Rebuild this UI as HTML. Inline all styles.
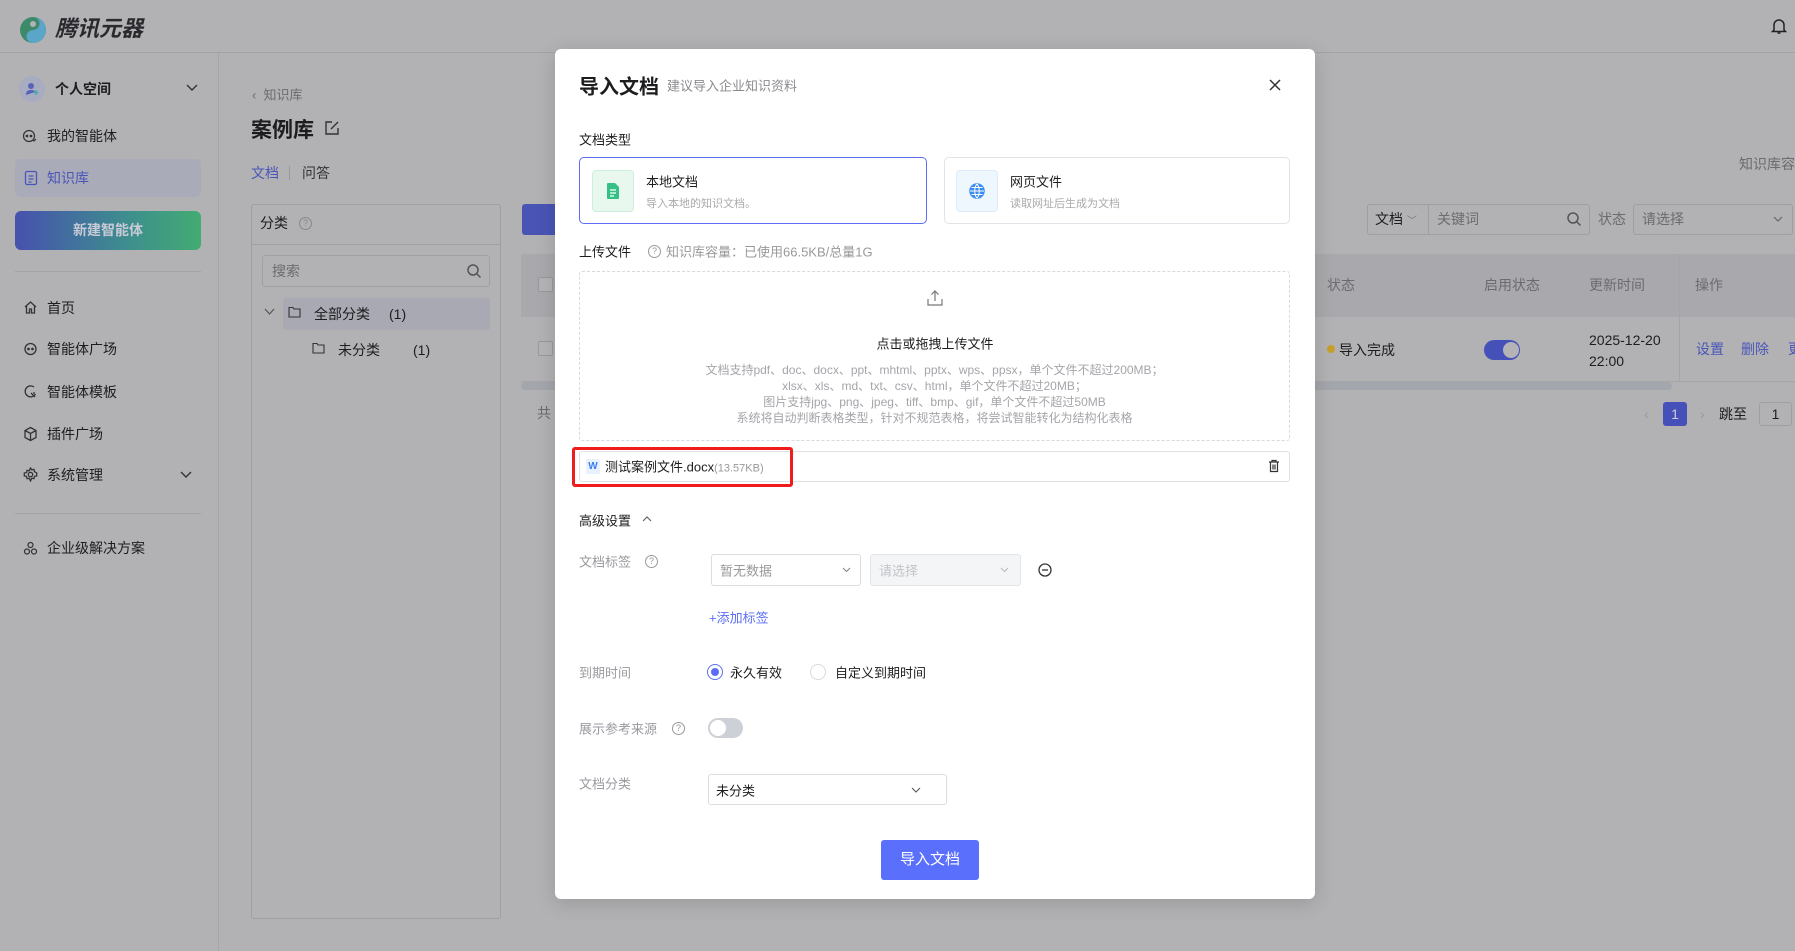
<!DOCTYPE html>
<html><head><meta charset="utf-8">
<style>
*{margin:0;padding:0;box-sizing:border-box}
body{width:1795px;height:951px;overflow:hidden;background:#b2b2b4;font-family:"Liberation Sans","Noto Sans CJK SC",sans-serif;font-size:14px;color:#1d1d1f;position:relative}
.a{position:absolute;white-space:nowrap}
.c{transform:translateY(-50%)}
.g{color:#6b6b70}
.blue{color:#4a55b8}
.ico{position:absolute}
</style></head><body>
<div class="a" style="left:0;top:0;width:1795px;height:53px;border-bottom:1px solid #a3a3a6"></div>
<svg class="ico" style="left:19px;top:16px" width="28" height="28" viewBox="0 0 28 28"><circle cx="14" cy="14" r="13" fill="#3d8a6a"/><path d="M14 1a13 13 0 0 1 0 26a6.5 6.5 0 0 1 0-13a6.5 6.5 0 0 0 0-13z" fill="#5aa5c8"/><circle cx="14" cy="8" r="3" fill="#b2b2b4"/></svg>
<div class="a c" style="left:55px;top:27px;font-size:22px;font-weight:bold;font-style:italic;color:#2a2a2e">腾讯元器</div>
<svg class="ico" style="left:1771px;top:17px" width="16" height="18" viewBox="0 0 16 18" fill="none" stroke="#222" stroke-width="1.5"><path d="M3 13V8a5 5 0 0 1 10 0v5l1.5 1.5h-13z"/><path d="M6.5 16h3"/></svg>
<div class="a" style="left:218px;top:53px;width:1px;height:898px;background:#a6a6a8"></div>
<div class="a" style="left:19px;top:76px;width:26px;height:26px;border-radius:50%;background:#a8acc0"></div>
<svg class="ico" style="left:25px;top:82px" width="14" height="14" viewBox="0 0 14 14"><circle cx="6" cy="4" r="3" fill="#5962b8"/><path d="M1 13c0-4 2-5 5-5s4 1 4 2" fill="#5962b8"/><path d="M11 8v5M8.5 10.5h5" stroke="#4aa" stroke-width="1.5"/></svg>
<div class="a c" style="left:55px;top:89px;font-size:14px;font-weight:bold">个人空间</div>
<svg class="ico" style="left:186px;top:84px" width="12" height="8" viewBox="0 0 12 8" fill="none" stroke="#333" stroke-width="1.4"><path d="M1 1l5 5 5-5"/></svg>
<div class="a" style="left:15px;top:159px;width:186px;height:38px;border-radius:5px;background:#a9abb8"></div>
<svg class="ico" style="left:22px;top:129px" width="16" height="16" viewBox="0 0 16 16" fill="none" stroke="#333" stroke-width="1.2"><circle cx="7" cy="7" r="5.5"/><circle cx="5" cy="7" r=".8" fill="#333"/><circle cx="9" cy="7" r=".8" fill="#333"/><path d="M11 11l1 1 2-2"/></svg>
<div class="a c" style="left:47px;top:136px">我的智能体</div>
<svg class="ico" style="left:24px;top:170px" width="14" height="16" viewBox="0 0 14 16" fill="none" stroke="#4a55b8" stroke-width="1.3"><rect x="1.5" y="1.5" width="11" height="13" rx="1.5"/><path d="M4.5 6h5M4.5 9h5M4.5 12h3"/></svg>
<div class="a c blue" style="left:47px;top:178px">知识库</div>
<div class="a" style="left:15px;top:211px;width:186px;height:39px;border-radius:6px;background:linear-gradient(90deg,#4751ae,#3d8e8e 60%,#43ab73);color:#c8cad6;font-weight:bold;text-align:center;line-height:39px">新建智能体</div>
<div class="a" style="left:15px;top:271px;width:186px;height:1px;background:#a3a3a6"></div>
<svg class="ico" style="left:23px;top:300px" width="15" height="15" viewBox="0 0 15 15" fill="none" stroke="#333" stroke-width="1.3"><path d="M2 7L7.5 2 13 7M3.5 6v7h3v-4h2v4h3V6"/></svg>
<div class="a c" style="left:47px;top:308px">首页</div>
<svg class="ico" style="left:23px;top:341px" width="15" height="15" viewBox="0 0 15 15" fill="none" stroke="#333" stroke-width="1.3"><circle cx="7.5" cy="8" r="5.5"/><circle cx="5.5" cy="8" r=".7" fill="#333"/><circle cx="9.5" cy="8" r=".7" fill="#333"/></svg>
<div class="a c" style="left:47px;top:349px">智能体广场</div>
<svg class="ico" style="left:23px;top:384px" width="15" height="15" viewBox="0 0 15 15" fill="none" stroke="#333" stroke-width="1.3"><path d="M11 3A5.5 5.5 0 1 0 12.5 10M8 9l4 4M10 9l2 0"/></svg>
<div class="a c" style="left:47px;top:392px">智能体模板</div>
<svg class="ico" style="left:23px;top:426px" width="15" height="16" viewBox="0 0 15 16" fill="none" stroke="#333" stroke-width="1.3"><path d="M7.5 1.5l5.5 3v7l-5.5 3-5.5-3v-7z M2 4.5l5.5 3 5.5-3M7.5 7.5v7"/></svg>
<div class="a c" style="left:47px;top:434px">插件广场</div>
<svg class="ico" style="left:23px;top:467px" width="15" height="15" viewBox="0 0 15 15" fill="none" stroke="#333" stroke-width="1.3"><circle cx="7.5" cy="7.5" r="2.2"/><path d="M7.5 1l1.3 1.8 2.2-.4.4 2.2L13.7 6v3l-2.3.4-.4 2.2-2.2-.4L7.5 14l-1.3-2.8-2.2.4-.4-2.2L1.3 9V6l2.3-.4.4-2.2 2.2.4z"/></svg>
<div class="a c" style="left:47px;top:475px">系统管理</div>
<svg class="ico" style="left:180px;top:471px" width="12" height="8" viewBox="0 0 12 8" fill="none" stroke="#333" stroke-width="1.4"><path d="M1 1l5 5 5-5"/></svg>
<div class="a" style="left:15px;top:513px;width:186px;height:1px;background:#a3a3a6"></div>
<svg class="ico" style="left:23px;top:541px" width="15" height="15" viewBox="0 0 15 15" fill="none" stroke="#333" stroke-width="1.2"><circle cx="7.5" cy="4" r="2.5"/><circle cx="4" cy="10.5" r="2.5"/><circle cx="11" cy="10.5" r="2.5"/></svg>
<div class="a c" style="left:47px;top:548px">企业级解决方案</div>
<div class="a c g" style="left:252px;top:94px;font-size:13px">‹&nbsp; 知识库</div>
<div class="a c" style="left:251px;top:129px;font-size:21px;font-weight:bold">案例库</div>
<svg class="ico" style="left:324px;top:120px" width="16" height="16" viewBox="0 0 16 16" fill="none" stroke="#333" stroke-width="1.4"><path d="M8 2H2v12h12V8M7 9l7-7"/></svg>
<div class="a c blue" style="left:251px;top:173px">文档</div>
<div class="a" style="left:289px;top:166px;width:1px;height:14px;background:#999"></div>
<div class="a c" style="left:302px;top:173px;color:#333">问答</div>
<div class="a" style="left:251px;top:204px;width:250px;height:715px;border:1px solid #a0a0a3;border-radius:3px"></div>
<div class="a" style="left:252px;top:244px;width:248px;height:1px;background:#a0a0a3"></div>
<div class="a c" style="left:260px;top:223px">分类</div>
<div class="a" style="left:299px;top:217px;width:13px;height:13px;border:1px solid #888;border-radius:50%;font-size:9px;line-height:11px;text-align:center;color:#888">?</div>
<div class="a" style="left:262px;top:255px;width:228px;height:32px;border:1px solid #a0a0a3;border-radius:3px"></div>
<div class="a c g" style="left:272px;top:271px">搜索</div>
<svg class="ico" style="left:466px;top:263px" width="16" height="16" viewBox="0 0 16 16" fill="none" stroke="#555" stroke-width="1.5"><circle cx="7" cy="7" r="5"/><path d="M11 11l3.5 3.5"/></svg>
<div class="a" style="left:283px;top:298px;width:207px;height:32px;border-radius:3px;background:#a8a9b2"></div>
<svg class="ico" style="left:264px;top:308px" width="11" height="8" viewBox="0 0 11 8" fill="none" stroke="#555" stroke-width="1.2"><path d="M1 1l4.5 5 4.5-5"/></svg>
<svg class="ico" style="left:288px;top:306px" width="13" height="12" viewBox="0 0 13 12" fill="none" stroke="#333" stroke-width="1.1"><path d="M1 1.5h4l1 1.5h6v8H1z"/></svg>
<div class="a c" style="left:314px;top:314px">全部分类</div>
<div class="a c" style="left:389px;top:314px">(1)</div>
<svg class="ico" style="left:312px;top:342px" width="13" height="12" viewBox="0 0 13 12" fill="none" stroke="#333" stroke-width="1.1"><path d="M1 1.5h4l1 1.5h6v8H1z"/></svg>
<div class="a c" style="left:338px;top:350px">未分类</div>
<div class="a c" style="left:413px;top:350px">(1)</div>
<div class="a" style="left:522px;top:204px;width:40px;height:31px;border-radius:3px;background:#4a54b4"></div>
<div class="a" style="left:521px;top:254px;width:1274px;height:63px;background:#a9a9ad"></div>
<div class="a" style="left:538px;top:277px;width:15px;height:15px;border:1px solid #999;border-radius:2px;background:#b4b4b7"></div>
<div class="a" style="left:538px;top:341px;width:15px;height:15px;border:1px solid #999;border-radius:2px;background:#b4b4b7"></div>
<div class="a" style="left:521px;top:381px;width:1274px;height:1px;background:#a6a6a9"></div>
<div class="a" style="left:521px;top:382px;width:1151px;height:8px;border-radius:4px;background:#a4a6ad"></div>
<div class="a" style="left:1679px;top:254px;width:1px;height:127px;background:#a4a4a7"></div>
<div class="a c g" style="left:537px;top:413px">共</div>
<div class="a c g" style="left:1739px;top:164px">知识库容</div>
<div class="a" style="left:1367px;top:204px;width:223px;height:31px;border:1px solid #9f9fa2;border-radius:3px"></div>
<div class="a" style="left:1428px;top:204px;width:1px;height:31px;background:#9f9fa2"></div>
<div class="a c" style="left:1375px;top:219px">文档 <span style="font-size:10px;color:#777">﹀</span></div>
<div class="a c g" style="left:1437px;top:219px">关键词</div>
<svg class="ico" style="left:1566px;top:211px" width="16" height="16" viewBox="0 0 16 16" fill="none" stroke="#555" stroke-width="1.5"><circle cx="7" cy="7" r="5"/><path d="M11 11l3.5 3.5"/></svg>
<div class="a c g" style="left:1598px;top:219px">状态</div>
<div class="a" style="left:1633px;top:204px;width:160px;height:31px;border:1px solid #9f9fa2;border-radius:3px"></div>
<div class="a c g" style="left:1642px;top:219px">请选择</div>
<svg class="ico" style="left:1773px;top:216px" width="10" height="7" viewBox="0 0 10 7" fill="none" stroke="#666" stroke-width="1.2"><path d="M1 1l4 4 4-4"/></svg>
<div class="a c g" style="left:1327px;top:285px">状态</div>
<div class="a c g" style="left:1484px;top:285px">启用状态</div>
<div class="a c g" style="left:1589px;top:285px">更新时间</div>
<div class="a c g" style="left:1695px;top:285px">操作</div>
<div class="a" style="left:1327px;top:345px;width:8px;height:8px;border-radius:50%;background:#c7a02a"></div>
<div class="a c" style="left:1339px;top:350px">导入完成</div>
<div class="a" style="left:1484px;top:340px;width:36px;height:20px;border-radius:10px;background:#4551b8"></div>
<div class="a" style="left:1503px;top:342px;width:16px;height:16px;border-radius:50%;background:#b4b4b7"></div>
<div class="a" style="left:1589px;top:330px;line-height:21px">2025-12-20<br>22:00</div>
<div class="a c blue" style="left:1696px;top:349px">设置</div>
<div class="a c blue" style="left:1741px;top:349px">删除</div>
<div class="a c blue" style="left:1788px;top:349px">更</div>
<div class="a c" style="left:1644px;top:414px;color:#999">‹</div>
<div class="a" style="left:1663px;top:402px;width:24px;height:24px;border-radius:3px;background:#4551b8;color:#ccd;text-align:center;line-height:24px">1</div>
<div class="a c" style="left:1700px;top:414px;color:#999">›</div>
<div class="a c" style="left:1719px;top:414px">跳至</div>
<div class="a" style="left:1759px;top:402px;width:33px;height:24px;border:1px solid #9f9fa2;border-radius:3px;text-align:center;line-height:22px">1</div>
<div class="a" style="left:555px;top:49px;width:760px;height:850px;background:#fff;border-radius:6px;box-shadow:0 4px 20px rgba(0,0,0,.15)"></div>
<div class="a c" style="left:579px;top:85px;font-size:20px;font-weight:bold">导入文档</div>
<div class="a c" style="left:667px;top:85px;font-size:13px;color:#8a8a8f">建议导入企业知识资料</div>
<svg class="ico" style="left:1268px;top:78px" width="14" height="14" viewBox="0 0 14 14" stroke="#333" stroke-width="1.5"><path d="M2 2l10 10M12 2L2 12"/></svg>
<div class="a c" style="left:579px;top:139px;font-size:13px">文档类型</div>
<div class="a" style="left:579px;top:157px;width:348px;height:67px;border:1px solid #5b6ef5;border-radius:5px"></div>
<div class="a" style="left:592px;top:170px;width:42px;height:42px;border:1px solid #cdeedc;border-radius:4px;background:#e8f8ef"></div>
<svg class="ico" style="left:606px;top:182px" width="14" height="18" viewBox="0 0 14 18"><path d="M1 2a1 1 0 0 1 1-1h7l4 4v11a1 1 0 0 1-1 1H2a1 1 0 0 1-1-1z" fill="#35c186"/><path d="M4 8h6M4 11h6M4 14h4" stroke="#fff" stroke-width="1.3"/></svg>
<div class="a c" style="left:646px;top:181px;font-size:13px">本地文档</div>
<div class="a c" style="left:646px;top:203px;font-size:11px;color:#aaa">导入本地的知识文档。</div>
<div class="a" style="left:944px;top:157px;width:346px;height:67px;border:1px solid #e2e3e8;border-radius:5px"></div>
<div class="a" style="left:956px;top:170px;width:42px;height:42px;border:1px solid #dcecfb;border-radius:4px;background:#eef6fe"></div>
<svg class="ico" style="left:969px;top:183px" width="16" height="16" viewBox="0 0 16 16" fill="none" stroke="#3b8cf0" stroke-width="1.5"><circle cx="8" cy="8" r="7" fill="#3b8cf0"/><path d="M1 8h14M8 1c-3 3-3 11 0 14M8 1c3 3 3 11 0 14M2.5 4.5h11M2.5 11.5h11" stroke="#fff" stroke-width="1"/></svg>
<div class="a c" style="left:1010px;top:181px;font-size:13px">网页文件</div>
<div class="a c" style="left:1010px;top:203px;font-size:11px;color:#aaa">读取网址后生成为文档</div>
<div class="a c" style="left:579px;top:251px;font-size:13px">上传文件</div>
<div class="a" style="left:648px;top:245px;width:13px;height:13px;border:1px solid #999;border-radius:50%;font-size:9px;line-height:11px;text-align:center;color:#999">?</div>
<div class="a c" style="left:666px;top:251px;font-size:13px;color:#999">知识库容量：已使用66.5KB/总量1G</div>
<div class="a" style="left:579px;top:271px;width:711px;height:170px;border:1px dashed #d8d9de;border-radius:3px"></div>
<svg class="ico" style="left:926px;top:289px" width="18" height="18" viewBox="0 0 18 18" fill="none" stroke="#777" stroke-width="1.2"><path d="M9 12V2M5.5 5.5L9 2l3.5 3.5M2 10v6h14v-6"/></svg>
<div class="a c" style="left:0;width:1870px;top:343px;text-align:center;font-size:13px">点击或拖拽上传文件</div>
<div class="a" style="left:579px;width:711px;top:362px;text-align:center;font-size:12px;line-height:16px;color:#a5a5aa">文档支持pdf、doc、docx、ppt、mhtml、pptx、wps、ppsx，单个文件不超过200MB；<br>xlsx、xls、md、txt、csv、html，单个文件不超过20MB；<br>图片支持jpg、png、jpeg、tiff、bmp、gif，单个文件不超过50MB<br>系统将自动判断表格类型，针对不规范表格，将尝试智能转化为结构化表格</div>
<div class="a" style="left:579px;top:451px;width:711px;height:31px;border:1px solid #e0e1e5;border-radius:3px"></div>
<div class="a" style="left:572px;top:447px;width:221px;height:40px;border:3px solid #f01c1c;border-radius:3px"></div>
<div class="a" style="left:586px;top:459px;width:14px;height:15px;background:#e8f1fd;color:#3b7cf0;font-size:10px;font-weight:bold;text-align:center;line-height:15px">W</div>
<div class="a c" style="left:605px;top:466px;font-size:13px">测试案例文件.docx<span style="font-size:11px;color:#999">(13.57KB)</span></div>
<svg class="ico" style="left:1268px;top:459px" width="12" height="14" viewBox="0 0 12 14" fill="none" stroke="#333" stroke-width="1.2"><path d="M1 3h10M4 3V1.5h4V3M2.5 3v9.5h7V3M5 5.5v5M7 5.5v5"/></svg>
<div class="a c" style="left:579px;top:520px;font-size:13px">高级设置</div>
<svg class="ico" style="left:642px;top:515px" width="10" height="7" viewBox="0 0 10 7" fill="none" stroke="#666" stroke-width="1.2"><path d="M1 6l4-4 4 4"/></svg>
<div class="a c" style="left:579px;top:561px;font-size:13px;color:#9a9aa0">文档标签</div>
<div class="a" style="left:645px;top:555px;width:13px;height:13px;border:1px solid #999;border-radius:50%;font-size:9px;line-height:11px;text-align:center;color:#999">?</div>
<div class="a" style="left:711px;top:554px;width:150px;height:32px;border:1px solid #dcdde2;border-radius:3px"></div>
<div class="a c" style="left:720px;top:570px;font-size:13px;color:#999">暂无数据</div>
<svg class="ico" style="left:842px;top:567px" width="9" height="6" viewBox="0 0 9 6" fill="none" stroke="#888" stroke-width="1.1"><path d="M1 1l3.5 3.5L8 1"/></svg>
<div class="a" style="left:870px;top:554px;width:151px;height:32px;border:1px solid #e4e5e9;border-radius:3px;background:#f4f5f7"></div>
<div class="a c" style="left:879px;top:570px;font-size:13px;color:#c3c3c8">请选择</div>
<svg class="ico" style="left:1000px;top:567px" width="9" height="6" viewBox="0 0 9 6" fill="none" stroke="#bbb" stroke-width="1.1"><path d="M1 1l3.5 3.5L8 1"/></svg>
<svg class="ico" style="left:1038px;top:563px" width="14" height="14" viewBox="0 0 14 14" fill="none" stroke="#333" stroke-width="1.3"><circle cx="7" cy="7" r="6"/><path d="M4 7h6"/></svg>
<div class="a c" style="left:709px;top:617px;font-size:13px;color:#5b6ef5">+添加标签</div>
<div class="a c" style="left:579px;top:672px;font-size:13px;color:#9a9aa0">到期时间</div>
<div class="a" style="left:707px;top:664px;width:16px;height:16px;border:1px solid #5b6ef5;border-radius:50%"></div>
<div class="a" style="left:711px;top:668px;width:8px;height:8px;border-radius:50%;background:#5b6ef5"></div>
<div class="a c" style="left:730px;top:672px;font-size:13px">永久有效</div>
<div class="a" style="left:810px;top:664px;width:16px;height:16px;border:1px solid #d8d9de;border-radius:50%"></div>
<div class="a c" style="left:835px;top:672px;font-size:13px">自定义到期时间</div>
<div class="a c" style="left:579px;top:728px;font-size:13px;color:#9a9aa0">展示参考来源</div>
<div class="a" style="left:672px;top:722px;width:13px;height:13px;border:1px solid #999;border-radius:50%;font-size:9px;line-height:11px;text-align:center;color:#999">?</div>
<div class="a" style="left:708px;top:718px;width:35px;height:20px;border-radius:10px;background:#cdd0d6"></div>
<div class="a" style="left:710px;top:720px;width:16px;height:16px;border-radius:50%;background:#fff"></div>
<div class="a c" style="left:579px;top:783px;font-size:13px;color:#9a9aa0">文档分类</div>
<div class="a" style="left:708px;top:774px;width:239px;height:31px;border:1px solid #dcdde2;border-radius:3px"></div>
<div class="a c" style="left:716px;top:790px;font-size:13px">未分类</div>
<svg class="ico" style="left:911px;top:787px" width="10" height="7" viewBox="0 0 10 7" fill="none" stroke="#555" stroke-width="1.1"><path d="M1 1l4 4 4-4"/></svg>
<div class="a" style="left:881px;top:840px;width:98px;height:40px;border-radius:3px;background:#5a6ffb;color:#fff;font-size:15px;text-align:center;line-height:40px">导入文档</div>
</body></html>
